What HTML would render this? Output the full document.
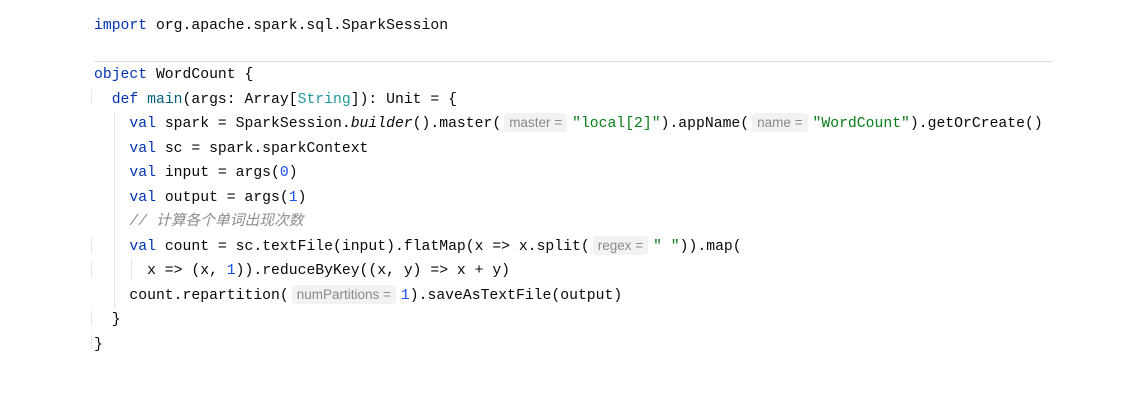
<!DOCTYPE html>
<html><head><meta charset="utf-8"><style>
body{margin:0;background:#fff;width:1140px;height:402px;overflow:hidden;position:relative}
.l{position:absolute;left:94px;font:14.75px/20px "Liberation Mono","Noto Sans CJK SC",monospace;color:#080808;white-space:pre}
.k{color:#0033b3}.s{color:#067d17}.n{color:#1750eb}.t{color:#20999d}.f{color:#00627a}.c{color:#8c8c8c;font-style:italic}.i{font-style:italic}
.h{display:inline;font:13.5px "Liberation Sans",sans-serif;line-height:0;color:#8a8a8a;background:#f2f2f2;border-radius:4px;padding:2px 5px;margin:0 5px 0 3px}
.g{position:absolute;width:1px;background:#e4e4e4}
</style></head><body>
<div style="position:absolute;left:94px;top:61px;width:958px;height:1px;background:#dcdcdc"></div>
<div class="g" style="left:114px;top:112px;height:196px"></div>
<div class="g" style="left:131px;top:260px;height:20px"></div>
<div class="g" style="left:91px;top:90px;height:14px"></div>
<div class="g" style="left:91px;top:238px;height:14px"></div>
<div class="g" style="left:91px;top:262px;height:14px"></div>
<div class="g" style="left:91px;top:311px;height:14px"></div>
<div class="g" style="left:91px;top:335px;height:14px"></div>
<div class="l" style="top:16px"><span class="k">import</span> org.apache.spark.sql.SparkSession</div>
<div class="l" style="top:65px"><span class="k">object</span> WordCount {</div>
<div class="l" style="top:90px">  <span class="k">def</span> <span class="f">main</span>(args: Array[<span class="t">String</span>]): Unit = {</div>
<div class="l" style="top:114px">    <span class="k">val</span> spark = SparkSession.<span class="i">builder</span>().master(<span class="h">master =</span><span class="s">"local[2]"</span>).appName(<span class="h">name =</span><span class="s">"WordCount"</span>).getOrCreate()</div>
<div class="l" style="top:139px">    <span class="k">val</span> sc = spark.sparkContext</div>
<div class="l" style="top:163px">    <span class="k">val</span> input = args(<span class="n">0</span>)</div>
<div class="l" style="top:188px">    <span class="k">val</span> output = args(<span class="n">1</span>)</div>
<div class="l" style="top:212px">    <span class="c">// 计算各个单词出现次数</span></div>
<div class="l" style="top:237px">    <span class="k">val</span> count = sc.textFile(input).flatMap(x =&gt; x.split(<span class="h">regex =</span><span class="s">" "</span>)).map(</div>
<div class="l" style="top:261px">      x =&gt; (x, <span class="n">1</span>)).reduceByKey((x, y) =&gt; x + y)</div>
<div class="l" style="top:286px">    count.repartition(<span class="h">numPartitions =</span><span class="n">1</span>).saveAsTextFile(output)</div>
<div class="l" style="top:310px">  }</div>
<div class="l" style="top:335px">}</div>
</body></html>
